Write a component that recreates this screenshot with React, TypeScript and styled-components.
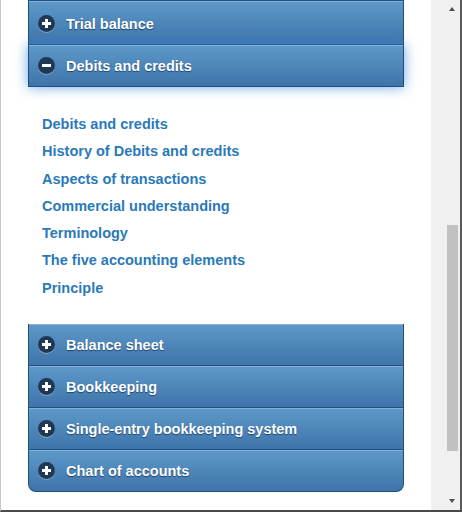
import styled, { createGlobalStyle, css } from 'styled-components'

const GlobalStyle = createGlobalStyle`
    html, body {
        margin: 0;
        padding: 0;
        background: #ffffff;
        font-family: 'Liberation Sans', Arial, sans-serif;
    }
`

type Section = { title: string; open?: boolean; links?: string[] }

const SECTIONS: Section[] = [
    { title: 'Trial balance' },
    {
        title: 'Debits and credits',
        open: true,
        links: [
            'Debits and credits',
            'History of Debits and credits',
            'Aspects of transactions',
            'Commercial understanding',
            'Terminology',
            'The five accounting elements',
            'Principle',
        ],
    },
    { title: 'Balance sheet' },
    { title: 'Bookkeeping' },
    { title: 'Single-entry bookkeeping system' },
    { title: 'Chart of accounts' },
]

const Icon = ({ open }: { open?: boolean }) => (
    <IconCircle>
        <svg width='17' height='17' viewBox='0 0 17 17'>
            <rect x='4' y='7' width='9' height='3' fill='#fff' />
            {!open && <rect x='7' y='4' width='3' height='9' fill='#fff' />}
        </svg>
    </IconCircle>
)

const App = () => {
    return (
        <>
            <GlobalStyle />
            <Frame>
                <Page>
                    <Accordion>
                        {SECTIONS.map((s, i) => (
                            <div key={s.title}>
                                <Header open={!!s.open} first={i === 0} last={i === SECTIONS.length - 1}>
                                    <Icon open={s.open} />
                                    <HeaderTitle>{s.title}</HeaderTitle>
                                </Header>
                                {s.open && (
                                    <Content>
                                        {s.links?.map((l) => (
                                            <LinkItem key={l}>{l}</LinkItem>
                                        ))}
                                    </Content>
                                )}
                            </div>
                        ))}
                    </Accordion>
                </Page>
                <Gutter>
                    <Scrollbar>
                        <Arrow dir='up' />
                        <Track>
                            <Thumb />
                        </Track>
                        <Arrow dir='down' />
                    </Scrollbar>
                </Gutter>
            </Frame>
        </>
    )
}

const Frame = styled.div(
    () => css`
        display: flex;
        height: 512px;
        width: 462px;
        box-sizing: border-box;
        border-left: 1px solid #c8c8c8;
        border-right: 2px solid #5a5a5a;
        border-bottom: 2px solid #4a4a4a;
        overflow: hidden;
    `
)

const Page = styled.div(
    () => css`
        width: 430px;
        padding: 0 0 0 27px;
        box-sizing: border-box;
        background: #fff;
    `
)

const Accordion = styled.div(
    () => css`
        width: 376px;
        display: flex;
        flex-direction: column;
    `
)

const Header = styled.div<{ open: boolean; first: boolean; last: boolean }>(
    ({ open, first, last }) => css`
        position: relative;
        display: flex;
        align-items: center;
        gap: 11px;
        height: 42px;
        padding-left: 9px;
        box-sizing: border-box;
        border: 1px solid #1f4e80;
        border-top: none;
        background: linear-gradient(#5e99c9, #3f74aa);
        box-shadow: inset 0 1px 0 rgba(255, 255, 255, 0.25);

        ${first &&
        css`
            height: 45px;
            padding-top: 2px;
            border-top: 1px solid #1f4e80;
        `}

        ${open &&
        css`
            z-index: 1;
            box-shadow: inset 0 1px 0 rgba(255, 255, 255, 0.25), 0 0 12px rgba(56, 136, 214, 0.75);
        `}

        ${last &&
        css`
            border-radius: 0 0 8px 8px;
        `}
    `
)

const IconCircle = styled.span(
    () => css`
        display: block;
        width: 17px;
        height: 17px;
        border-radius: 50%;
        background: #1f3854;
        box-shadow: 0 1px 0 rgba(255, 255, 255, 0.3);

        & svg {
            display: block;
        }
    `
)

const HeaderTitle = styled.span(
    () => css`
        color: #fff;
        font-size: 14.5px;
        font-weight: bold;
        text-shadow: 0 1px 1px #1c4470;
    `
)

const Content = styled.div(
    () => css`
        display: flex;
        flex-direction: column;
        padding: 24px 14px 22px 14px;
        background: #fff;
    `
)

const LinkItem = styled.a(
    () => css`
        display: block;
        line-height: 27.3px;
        font-size: 14.5px;
        font-weight: bold;
        color: #2a79b9;
        text-decoration: none;
    `
)

const Gutter = styled.div(
    () => css`
        flex: 1;
        display: flex;
        justify-content: flex-end;
        background: #f0f0f0;
    `
)

const Scrollbar = styled.div(
    () => css`
        width: 14px;
        display: flex;
        flex-direction: column;
        align-items: center;
        padding: 5px 0 5px;
        box-sizing: border-box;
        margin-right: 1px;
    `
)

const Track = styled.div(
    () => css`
        flex: 1;
        width: 11px;
        padding-top: 212px;
        padding-bottom: 46px;
        box-sizing: border-box;
        display: flex;
    `
)

const Thumb = styled.div(
    () => css`
        flex: 1;
        background: #c1c1c1;
    `
)

const Arrow = styled.div<{ dir: 'up' | 'down' }>(
    ({ dir }) => css`
        width: 0;
        height: 0;
        margin: 2px 0;
        border-left: 3.5px solid transparent;
        border-right: 3.5px solid transparent;
        ${dir === 'up'
            ? css`
                  border-bottom: 4px solid #505050;
              `
            : css`
                  border-top: 4px solid #505050;
              `}
    `
)

export default App
